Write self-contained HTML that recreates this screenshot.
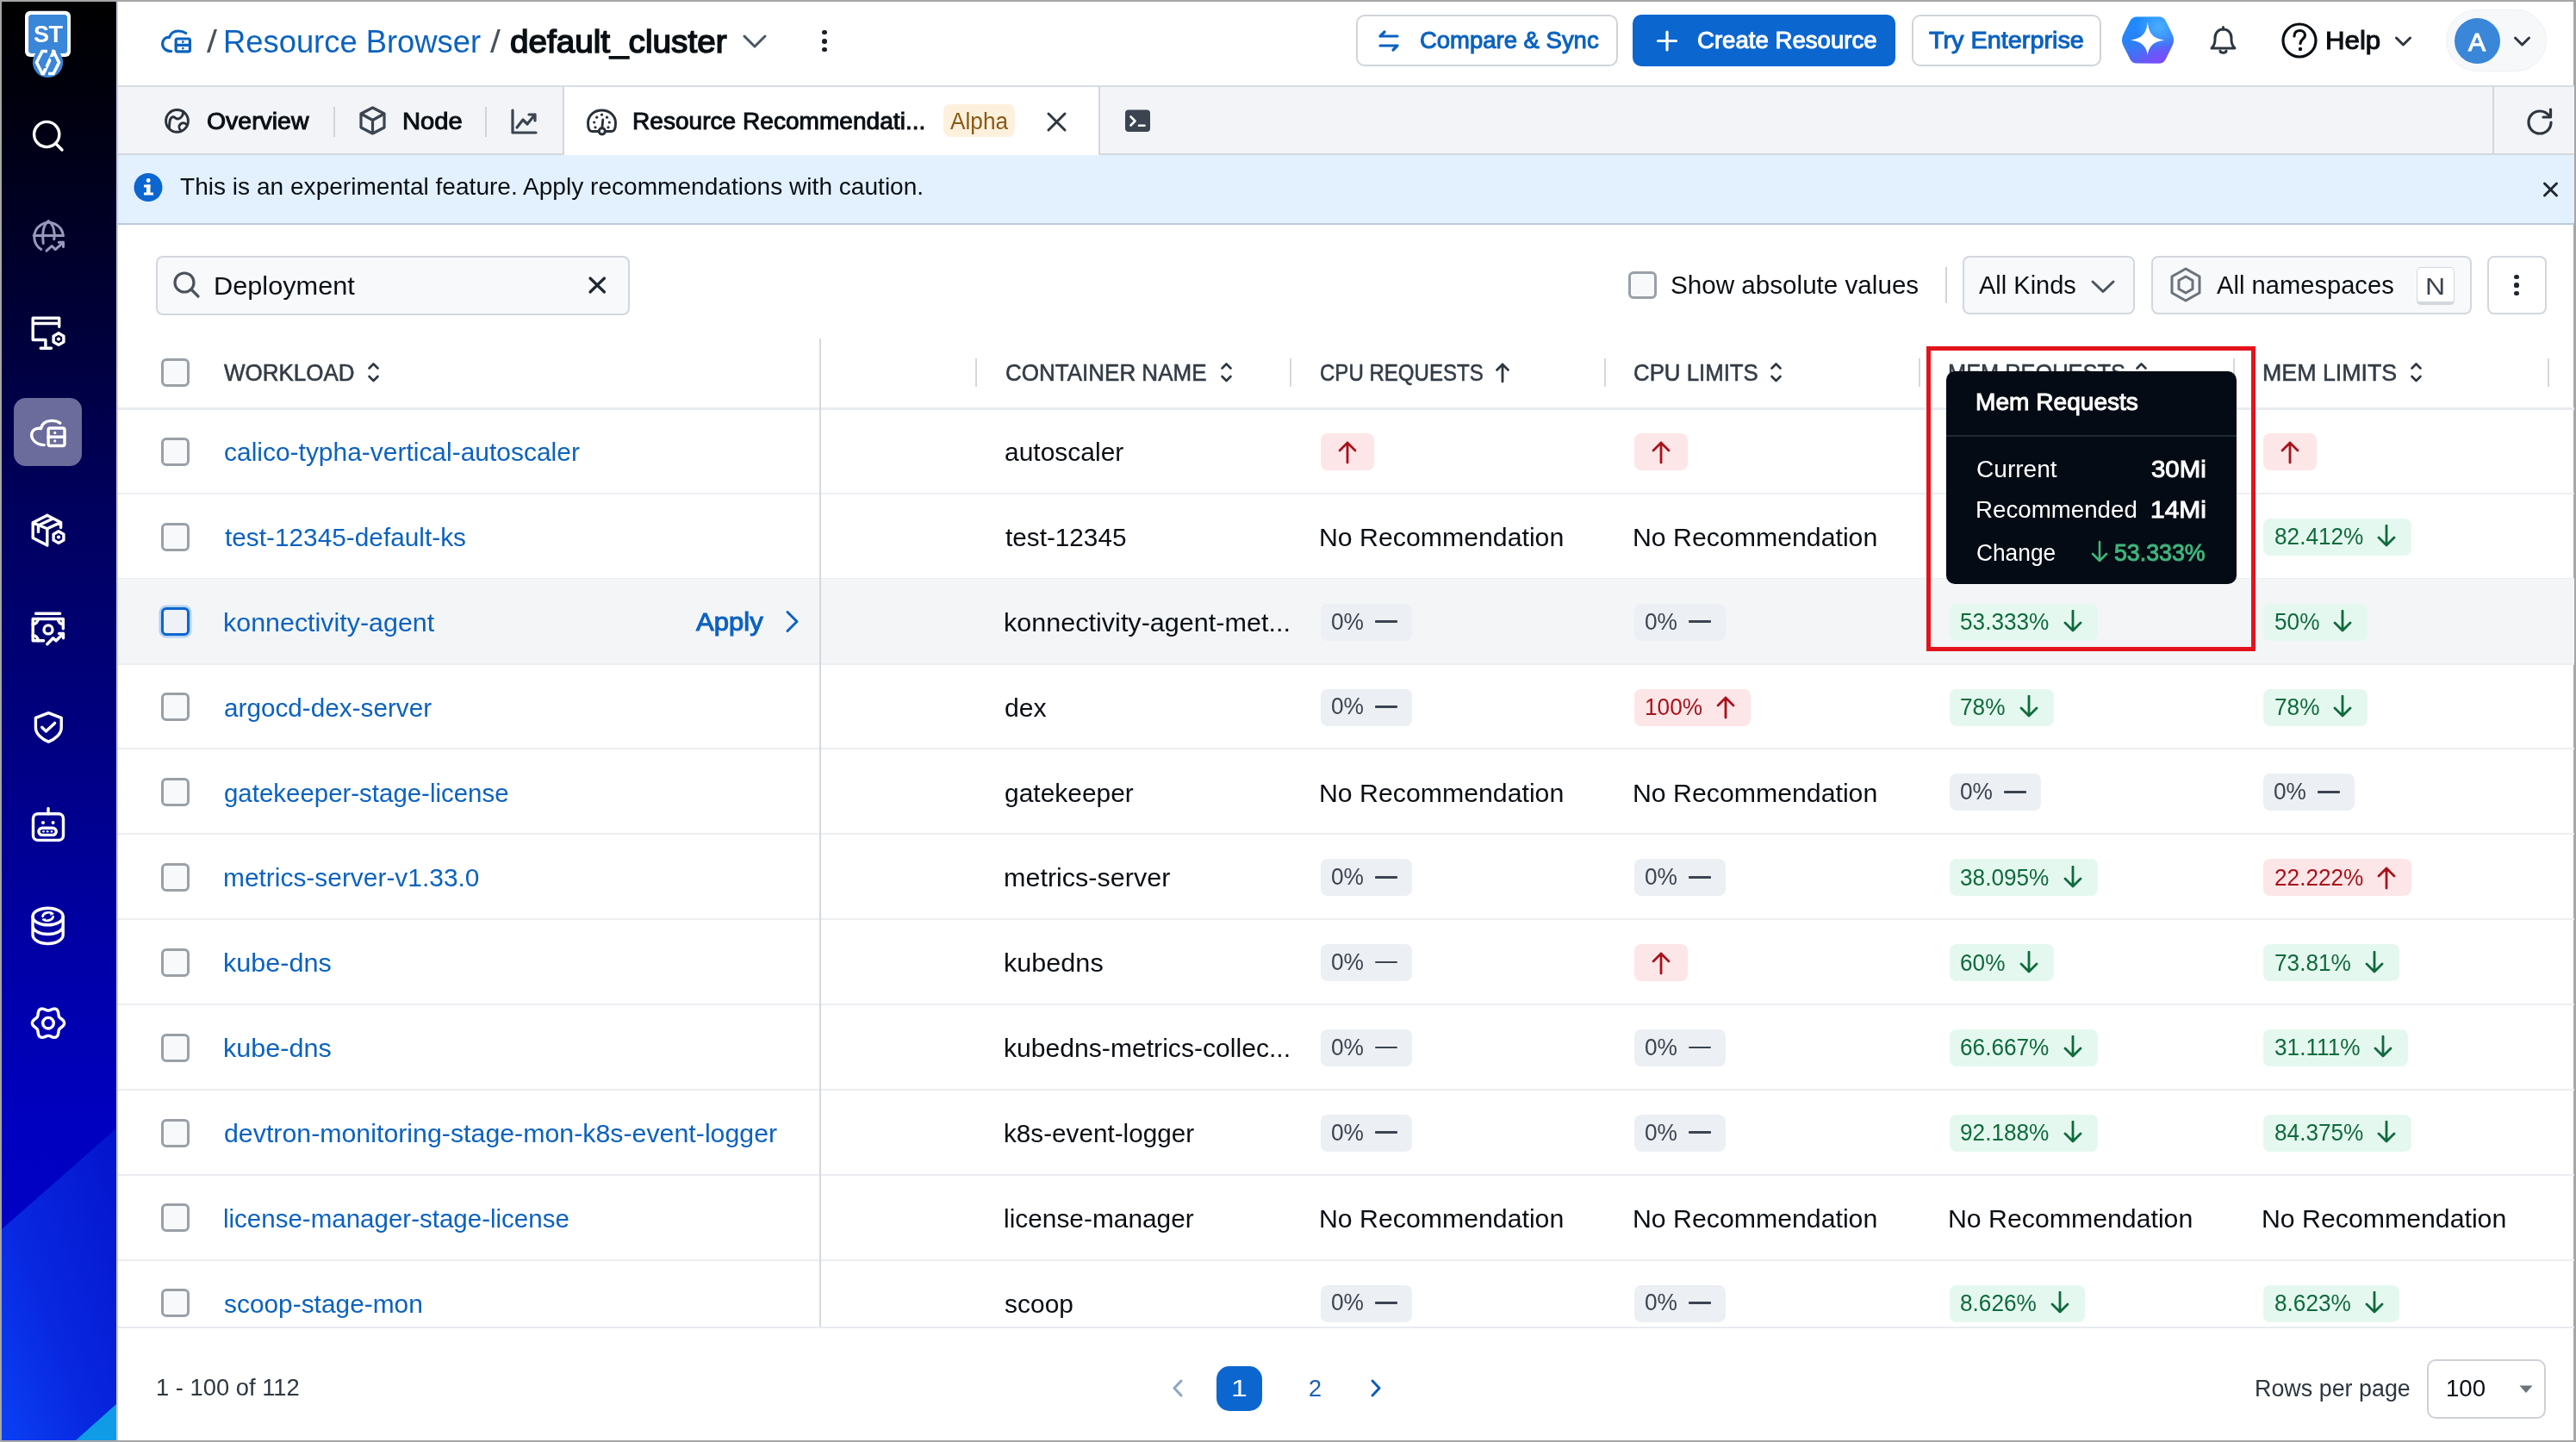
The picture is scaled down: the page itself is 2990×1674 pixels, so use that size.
<!DOCTYPE html>
<html><head><meta charset='utf-8'><style>
html,body{margin:0;padding:0;}
body{width:2990px;height:1674px;position:relative;overflow:hidden;background:#a6a6a6;font-family:"Liberation Sans", sans-serif;-webkit-font-smoothing:antialiased;}
#root{position:absolute;left:0;top:0;width:2990px;height:1674px;will-change:transform;}
</style></head><body>
<div id="root">
<div style='position:absolute;left:2px;top:2px;width:2985px;height:1670px;background:#ffffff'></div>
<div style='position:absolute;left:2px;top:2px;width:133px;height:1670px;overflow:hidden;background:linear-gradient(to bottom,#000000 0%,#00000c 6%,#000032 20%,#000060 36%,#00007e 50%,#0000a4 65%,#0000c0 78%,#0004cc 100%)'><svg width='133' height='1670' style='position:absolute;left:0;top:0'><defs><linearGradient id='sbband' x1='1' y1='0' x2='0' y2='1'><stop offset='0' stop-color='#0414cc'/><stop offset='0.6' stop-color='#0828e0'/><stop offset='1' stop-color='#0a40f4'/></linearGradient></defs><polygon points='133,1308 0,1425 0,1670 133,1670' fill='url(#sbband)'/><polygon points='133,1628 86,1670 133,1670' fill='#0f9be6'/></svg></div>
<div style='position:absolute;left:135px;top:2px;width:2px;height:1670px;background:#c9cbe8'></div>
<svg style='position:absolute;left:0;top:0' width='135' height='100' viewBox='0 0 135 100'><rect x='29' y='12.8' width='53' height='53.2' rx='6' fill='#ffffff'/><rect x='33.1' y='16.9' width='45' height='45' rx='3.5' fill='#3a86d8'/><text x='55.8' y='48.7' text-anchor='middle' font-family='Liberation Sans' font-weight='700' font-size='27' fill='#ffffff' letter-spacing='-0.5'>ST</text><circle cx='55.5' cy='72.5' r='17.6' fill='#3a86d8'/><g fill='none' stroke='#ffffff' stroke-width='3.6' stroke-linejoin='miter'><path d='M55 59.5 H49 L42.5 72.5 L49 85.5 H51'/><path d='M56 85.5 H62 L68.5 72.5 L62 59.5 H60'/></g><path d='M61.5 57.5 L65 59 L51.5 87.5 L48 86 Z' fill='#ffffff'/><path d='M48.5 66 L53.5 66 L50.5 72.5 L54 79 L49 79 L46 72.5 Z' fill='#3a86d8'/><path d='M62.5 66 L57.5 66 L60.5 72.5 L57 79 L62 79 L65 72.5 Z' fill='#3a86d8'/></svg>
<div style='position:absolute;left:16px;top:462px;width:79px;height:79px;background:#6b6b9c;border-radius:14px'></div>
<svg style='position:absolute;left:0;top:0' width='135' height='1674' viewBox='0 0 135 1674'><g stroke='#ffffff' stroke-width='3.4' fill='none' stroke-linecap='round' stroke-linejoin='round'><circle cx='54.2' cy='156' r='14.6'/><path d='M64.8 166.8 L72 174'/><path d='M68.7 379.3 V369.2 H38.2 V394.5 H52.9 V404.3 M38.2 375.5 H68.7 M47.2 404.3 H59.4'/><path d='M68.00 386.80 L73.89 390.20 L73.89 397.00 L68.00 400.40 L62.11 397.00 L62.11 390.20 Z'/><path d='M51.2 516.6 C43 516.6 36.7 511 36.7 505 C36.7 499 42 496.5 47.6 497.5 C49 491 54 488.4 60 488.4 C64 488.4 67.5 489.5 69.7 491.2'/><rect x='56.1' y='497' width='18.9' height='20.5' rx='2'/><path d='M56.1 507.2 H75'/><path d='M54.8 598.2 L70.6 606.4 V612.5 M54.8 598.2 L38.2 606.8 V624.4 L54.8 633.1 M38.2 606.8 L54.8 613.7 L70.6 606.4 M54.8 613.7 V633.1 M44.5 617.5 V610 L61 602.3'/><path d='M68.00 616.80 L73.89 620.20 L73.89 627.00 L68.00 630.40 L62.11 627.00 L62.11 620.20 Z'/><path d='M41.5 712.2 H69.7 M73.3 729.7 V718.5 H38.2 V743.8 H50.6'/><path d='M38.2 724.5 A6 6 0 0 0 44.2 718.5 M67.3 718.5 A6 6 0 0 0 73.3 724.5 M38.2 737.8 A6 6 0 0 1 44.2 743.8'/><circle cx='56' cy='730.9' r='5'/><path d='M54.8 747.7 L61.7 740.8 L65.1 743.8 L73.5 735.4 M68.5 735.4 H73.5 V740.8'/><path d='M56.3 827.7 L71.2 833.3 V844.7 C71.2 852 64 858 56.3 861.1 C48.6 858 41.4 852 41.4 844.7 V833.3 Z'/><path d='M48.7 844.3 L53.3 848.9 L63.6 839.4'/><path d='M56 938.5 V944.7'/><rect x='38.5' y='944.7' width='35' height='30.7' rx='5.5'/><rect x='44.9' y='961.2' width='20.4' height='8.2' rx='4.1'/><ellipse cx='55.6' cy='1064' rx='17.6' ry='9.8'/><path d='M38 1064 V1085 C38 1091 46 1095.5 55.6 1095.5 C65.2 1095.5 73.2 1091 73.2 1085 V1064 M38 1074.5 C38 1080.5 46 1084.5 55.6 1084.5 C65.2 1084.5 73.2 1080.5 73.2 1074.5'/><path d='M49.5 1064 C50 1059.5 57 1058 61 1060.5 M61.7 1064 C61 1068.5 54 1070 50.2 1067.5' stroke-width='2.6'/><path d='M74.60 1187.70 L74.38 1188.99 L73.76 1190.20 L72.84 1191.28 L71.76 1192.22 L70.66 1193.04 L69.69 1193.79 L68.93 1194.57 L68.42 1195.46 L68.12 1196.51 L67.95 1197.73 L67.79 1199.09 L67.52 1200.50 L67.04 1201.84 L66.30 1202.98 L65.30 1203.81 L64.08 1204.26 L62.72 1204.33 L61.32 1204.08 L59.97 1203.60 L58.71 1203.06 L57.57 1202.60 L56.51 1202.33 L55.49 1202.33 L54.43 1202.60 L53.29 1203.06 L52.03 1203.60 L50.68 1204.08 L49.28 1204.33 L47.92 1204.26 L46.70 1203.81 L45.70 1202.98 L44.96 1201.84 L44.48 1200.50 L44.21 1199.09 L44.05 1197.73 L43.88 1196.51 L43.58 1195.46 L43.07 1194.57 L42.31 1193.79 L41.34 1193.04 L40.24 1192.22 L39.16 1191.28 L38.24 1190.20 L37.62 1188.99 L37.40 1187.70 L37.62 1186.41 L38.24 1185.20 L39.16 1184.12 L40.24 1183.18 L41.34 1182.36 L42.31 1181.61 L43.07 1180.83 L43.58 1179.94 L43.88 1178.89 L44.05 1177.67 L44.21 1176.31 L44.48 1174.90 L44.96 1173.56 L45.70 1172.42 L46.70 1171.59 L47.92 1171.14 L49.28 1171.07 L50.68 1171.32 L52.03 1171.80 L53.29 1172.34 L54.43 1172.80 L55.49 1173.07 L56.51 1173.07 L57.57 1172.80 L58.71 1172.34 L59.97 1171.80 L61.32 1171.32 L62.72 1171.07 L64.08 1171.14 L65.30 1171.59 L66.30 1172.42 L67.04 1173.56 L67.52 1174.90 L67.79 1176.31 L67.95 1177.67 L68.12 1178.89 L68.42 1179.94 L68.93 1180.83 L69.69 1181.61 L70.66 1182.36 L71.76 1183.18 L72.84 1184.12 L73.76 1185.20 L74.38 1186.41 L74.60 1187.70 Z'/><circle cx='56' cy='1187.7' r='6.3'/></g><g fill='#ffffff'><circle cx='68' cy='393.6' r='2.1'/><circle cx='68' cy='623.6' r='2.1'/><circle cx='63.75' cy='502.4' r='1.6'/><circle cx='63.75' cy='511.9' r='1.6'/><circle cx='50' cy='955' r='2'/><circle cx='61.6' cy='955' r='2'/><circle cx='50.5' cy='965.3' r='1.3'/><circle cx='55.2' cy='965.3' r='1.3'/><circle cx='59.9' cy='965.3' r='1.3'/><path d='M58 1058.5 L62.5 1060.5 L58.5 1063 Z M53 1066 L49 1067.8 L53 1070 Z'/></g><g stroke='#9898bd' stroke-width='3' fill='none' stroke-linecap='round' stroke-linejoin='round'><path d='M73.3 273.4 A16.8 16.8 0 1 0 47.8 289.5'/><path d='M39.2 273.4 H73.3'/><path d='M50.2 282.4 C48.5 272 50 261 56.3 256.6 C62.5 261 64 270 62.8 277.8'/><path d='M54 291.2 L60.2 285.5 L64.3 289.7 L73.5 281.3 M68.2 281.3 H73.5 V286.6'/></g></svg>
<div style='position:absolute;left:137px;top:99px;width:2851px;height:2px;background:#d9dde2'></div>
<svg style='position:absolute;left:0;top:0' width='240' height='100' viewBox='0 0 240 100'><g stroke='#0b62c0' stroke-width='3.2' fill='none' stroke-linecap='round' stroke-linejoin='round'><path d='M198.7 59.5 C192.5 59.5 188.6 55.5 188.6 51 C188.6 46 192 43 196.5 43.5 C198 38.5 202 36 207 36 C210.5 36 213.5 37 215.7 38.5'/><rect x='204.2' y='45' width='16.2' height='14.8' rx='1.8'/><path d='M204.2 52.4 H220.4'/></g><g fill='#0b62c0'><circle cx='212.3' cy='48.7' r='1.4'/><circle cx='212.3' cy='56.1' r='1.4'/></g></svg>
<div style='position:absolute;left:240.00px;top:26.53px;font-size:36px;font-weight:400;line-height:43px;color:#4a525c;white-space:pre;transform:scaleX(1.2000);transform-origin:0 0;'>/</div>
<div style='position:absolute;left:258.97px;top:26.53px;font-size:36px;font-weight:400;line-height:43px;color:#0b62c0;white-space:pre;transform:scaleX(1.0102);transform-origin:0 0;'>Resource Browser</div>
<div style='position:absolute;left:568.50px;top:26.53px;font-size:36px;font-weight:400;line-height:43px;color:#4a525c;white-space:pre;transform:scaleX(1.1900);transform-origin:0 0;'>/</div>
<div style='position:absolute;left:592.33px;top:26.93px;font-size:36px;font-weight:400;line-height:43px;color:#0a0f14;white-space:pre;transform:scaleX(1.0742);transform-origin:0 0;-webkit-text-stroke:1.5px #0a0f14;'>default_cluster</div>
<svg style='position:absolute;left:862px;top:40px;' width='28' height='17' viewBox='0 0 28 17' fill='none'><path d='M2 2 L14 14 L26 2' stroke='#4b5563' stroke-width='3' fill='none' stroke-linecap='round' stroke-linejoin='round'/></svg>
<div style='position:absolute;left:954px;top:34.900000000000006px;width:5.600000000000023px;height:5.599999999999994px;background:#1a1f26;border-radius:50%'></div>
<div style='position:absolute;left:954px;top:45.0px;width:5.600000000000023px;height:5.599999999999994px;background:#1a1f26;border-radius:50%'></div>
<div style='position:absolute;left:954px;top:54.800000000000004px;width:5.600000000000023px;height:5.599999999999994px;background:#1a1f26;border-radius:50%'></div>
<div style='position:absolute;left:1574px;top:17px;width:304px;height:60px;box-sizing:border-box;border:2px solid #d0d4d9;border-radius:10px;background:#fff'></div>
<svg style='position:absolute;left:1598px;top:34px;' width='29' height='27' viewBox='0 0 29 27' fill='none'><g stroke='#0b62c0' stroke-width='3.2' fill='none' stroke-linecap='round' stroke-linejoin='round'><path d='M4 8 H24 M4 8 L9 3 M24 19 H4 M24 19 L19 24'/></g></svg>
<div style='position:absolute;left:1648.02px;top:30.00px;font-size:28px;font-weight:400;line-height:34px;color:#0b62c0;white-space:pre;transform:scaleX(0.9810);transform-origin:0 0;-webkit-text-stroke:1.00px #0b62c0;'>Compare &amp; Sync</div>
<div style='position:absolute;left:1895px;top:17px;width:305px;height:60px;background:#0b66d0;border-radius:10px'></div>
<svg style='position:absolute;left:1922px;top:35px;' width='26' height='25' viewBox='0 0 26 25' fill='none'><path d='M13 2 V23 M2.5 12.5 H23.5' stroke='#fff' stroke-width='3.2' stroke-linecap='round'/></svg>
<div style='position:absolute;left:1969.51px;top:30.00px;font-size:28px;font-weight:400;line-height:34px;color:#ffffff;white-space:pre;transform:scaleX(0.9857);transform-origin:0 0;-webkit-text-stroke:1.00px #ffffff;'>Create Resource</div>
<div style='position:absolute;left:2219px;top:17px;width:220px;height:60px;box-sizing:border-box;border:2px solid #d0d4d9;border-radius:10px;background:#fff'></div>
<div style='position:absolute;left:2238.97px;top:30.00px;font-size:28px;font-weight:400;line-height:34px;color:#0b62c0;white-space:pre;transform:scaleX(1.0289);transform-origin:0 0;-webkit-text-stroke:1.00px #0b62c0;'>Try Enterprise</div>
<svg style='position:absolute;left:0;top:0' width='2990' height='100' viewBox='0 0 2990 100'><defs><linearGradient id='aig' x1='0.35' y1='0' x2='0.65' y2='1'><stop offset='0' stop-color='#1a8cff'/><stop offset='0.5' stop-color='#2f7ff6'/><stop offset='1' stop-color='#6a55f6'/></linearGradient><radialGradient id='aih' cx='0.72' cy='0.22' r='0.45'><stop offset='0' stop-color='#4fb4ff' stop-opacity='0.9'/><stop offset='1' stop-color='#4fb4ff' stop-opacity='0'/></radialGradient><radialGradient id='aip' cx='0.72' cy='0.95' r='0.4'><stop offset='0' stop-color='#7d4cff' stop-opacity='0.9'/><stop offset='1' stop-color='#7d4cff' stop-opacity='0'/></radialGradient></defs><path id='aihex' d='M2480 19.5 H2506 Q2511 19.5 2513.5 24 L2521.5 40 Q2524.5 46.5 2521.5 53 L2513.5 69 Q2511 73.5 2506 73.5 H2480 Q2475 73.5 2472.5 69 L2464.5 53 Q2461.5 46.5 2464.5 40 L2472.5 24 Q2475 19.5 2480 19.5 Z' fill='url(#aig)'/><path d='M2480 19.5 H2506 Q2511 19.5 2513.5 24 L2521.5 40 Q2524.5 46.5 2521.5 53 L2513.5 69 Q2511 73.5 2506 73.5 H2480 Q2475 73.5 2472.5 69 L2464.5 53 Q2461.5 46.5 2464.5 40 L2472.5 24 Q2475 19.5 2480 19.5 Z' fill='url(#aih)'/><path d='M2480 19.5 H2506 Q2511 19.5 2513.5 24 L2521.5 40 Q2524.5 46.5 2521.5 53 L2513.5 69 Q2511 73.5 2506 73.5 H2480 Q2475 73.5 2472.5 69 L2464.5 53 Q2461.5 46.5 2464.5 40 L2472.5 24 Q2475 19.5 2480 19.5 Z' fill='url(#aip)'/><path d='M2492.8 25 C2494 38 2498 44.5 2512 46.4 C2498 48.5 2494 55 2492.8 64 C2491.5 55 2487.5 48.5 2473 46.4 C2487.5 44.5 2491.5 38 2492.8 25 Z' fill='#ffffff'/></svg>
<svg style='position:absolute;left:2563px;top:29px;' width='35' height='37' viewBox='0 0 35 37' fill='none'><g stroke='#2e3640' stroke-width='3' fill='none' stroke-linecap='round' stroke-linejoin='round'><path d='M4 27 C7 24 8 21 8 17 V15 C8 9 12 5 17.5 5 C23 5 27 9 27 15 V17 C27 21 28 24 31 27 Z'/><path d='M17.5 2.5 V5'/><path d='M14 30 C14 33 21 33 21 30'/></g></svg>
<svg style='position:absolute;left:2647px;top:25px;' width='44' height='44' viewBox='0 0 44 44' fill='none'><circle cx='22' cy='22' r='19' stroke='#0a0f14' stroke-width='3.2' fill='none'/><path d='M16 17 C16 12.5 19 10.5 22.5 10.5 C26 10.5 28.5 13 28.5 16 C28.5 20 23 20.5 23 25.5' stroke='#0a0f14' stroke-width='3.2' fill='none' stroke-linecap='round'/><circle cx='23' cy='32' r='2.2' fill='#0a0f14'/></svg>
<div style='position:absolute;left:2698.85px;top:30.45px;font-size:29px;font-weight:400;line-height:35px;color:#0a0f14;white-space:pre;transform:scaleX(1.0772);transform-origin:0 0;-webkit-text-stroke:1.04px #0a0f14;'>Help</div>
<svg style='position:absolute;left:2779px;top:41px;' width='21' height='14' viewBox='0 0 21 14' fill='none'><path d='M2.5 3 L10.5 11 L18.5 3' stroke='#2e3640' stroke-width='3' fill='none' stroke-linecap='round' stroke-linejoin='round'/></svg>
<div style='position:absolute;left:2839px;top:11px;width:117px;height:72px;box-sizing:border-box;background:#f6f8fa;border:1.5px solid #eef0f3;border-radius:36px'></div>
<div style='position:absolute;left:2849px;top:21px;width:53px;height:53px;background:#3a86d8;border-radius:50%'></div>
<div style='position:absolute;left:2865.00px;top:30.61px;font-size:30px;font-weight:400;line-height:36px;color:#ffffff;white-space:pre;-webkit-text-stroke:1.07px #ffffff;'>A</div>
<svg style='position:absolute;left:2917px;top:41px;' width='21' height='15' viewBox='0 0 21 15' fill='none'><path d='M2.5 3 L10.5 11 L18.5 3' stroke='#2e3640' stroke-width='3' fill='none' stroke-linecap='round' stroke-linejoin='round'/></svg>
<div style='position:absolute;left:137px;top:101px;width:2851px;height:77px;background:#f2f4f7'></div>
<div style='position:absolute;left:137px;top:178px;width:2851px;height:2px;background:#d3d7dc'></div>
<div style='position:absolute;left:653px;top:101px;width:624px;height:79px;background:#fff;box-sizing:border-box;border-left:2px solid #d3d7dc;border-right:2px solid #d3d7dc'></div>
<svg style='position:absolute;left:0;top:0' width='240' height='180' viewBox='0 0 240 180'><g stroke='#2a313a' stroke-width='2.9' fill='none' stroke-linecap='round' stroke-linejoin='round'><circle cx='205.5' cy='140.4' r='12.9'/><path d='M196.4 148.5 C196.8 144 196.5 140.5 198 137.8 C199.3 135.5 201.5 135 203.5 136.8 C205.5 138.5 207.8 138.2 209.8 136.5 C211.8 134.8 212.8 132 212.6 129.4'/><path d='M209.5 151 C207.8 149.5 207.3 146.5 209 144.5 C210.8 142.5 213.8 142.3 216.5 144.3'/></g></svg>
<div style='position:absolute;left:240.35px;top:125.44px;font-size:27px;font-weight:400;line-height:32px;color:#0a0f14;white-space:pre;transform:scaleX(1.0527);transform-origin:0 0;-webkit-text-stroke:0.96px #0a0f14;'>Overview</div>
<div style='position:absolute;left:386.5px;top:123.6px;width:2.0px;height:35.900000000000006px;background:#d0d4d9'></div>
<svg style='position:absolute;left:416px;top:122px;' width='33' height='36' viewBox='0 0 33 36' fill='none'><g stroke='#3b4450' stroke-width='3.2' fill='none' stroke-linejoin='round'><path d='M16.5 3 L30 10 V26 L16.5 33 L3 26 V10 Z'/><path d='M3 10 L16.5 17.5 L30 10 M16.5 17.5 V33'/></g></svg>
<div style='position:absolute;left:466.84px;top:125.34px;font-size:27px;font-weight:400;line-height:32px;color:#0a0f14;white-space:pre;transform:scaleX(1.0806);transform-origin:0 0;-webkit-text-stroke:0.96px #0a0f14;'>Node</div>
<div style='position:absolute;left:563px;top:123.6px;width:2px;height:35.900000000000006px;background:#d0d4d9'></div>
<svg style='position:absolute;left:592px;top:125px;' width='33' height='32' viewBox='0 0 33 32' fill='none'><g stroke='#3b4450' stroke-width='3.2' fill='none' stroke-linecap='round' stroke-linejoin='round'><path d='M3 3 V29 H30'/><path d='M8 23 L15 14 L20 19 L29 8 M22 8 H29 V15'/></g></svg>
<svg style='position:absolute;left:0;top:0' width='740' height='180' viewBox='0 0 740 180'><g stroke='#2a313a' stroke-width='3' fill='none' stroke-linecap='round' stroke-linejoin='round'><path d='M695 152.5 H687 C684 152.5 682.5 148 682.5 142.5 C682.5 134 689.8 128 698.5 128 C707.2 128 714.5 134 714.5 142.5 C714.5 148 713 152.5 710 152.5 H702'/><path d='M698.8 148.5 L699.8 138.8' stroke-width='2.8'/><circle cx='698.8' cy='152.3' r='3.6' fill='#ffffff'/></g><g fill='#2a313a'><circle cx='698.5' cy='133.2' r='1.6'/><circle cx='692.7' cy='136.2' r='1.6'/><circle cx='704.5' cy='136.2' r='1.6'/><circle cx='689.7' cy='142' r='1.6'/><circle cx='707.3' cy='142' r='1.6'/><circle cx='691' cy='147.8' r='1.6'/><circle cx='706' cy='147.8' r='1.6'/></g></svg>
<div style='position:absolute;left:733.92px;top:125.44px;font-size:27px;font-weight:400;line-height:32px;color:#0a0f14;white-space:pre;transform:scaleX(1.0402);transform-origin:0 0;-webkit-text-stroke:0.96px #0a0f14;'>Resource Recommendati...</div>
<div style='position:absolute;left:1095px;top:121px;width:83px;height:38px;background:#fdf1de;border-radius:8px'></div>
<div style='position:absolute;left:1103.00px;top:125.14px;font-size:27px;font-weight:400;line-height:32px;color:#8a5a14;white-space:pre;transform:scaleX(0.9710);transform-origin:0 0;'>Alpha</div>
<svg style='position:absolute;left:1214px;top:129px;' width='26' height='25' viewBox='0 0 26 25' fill='none'><path d='M3 3 L22 22 M22 3 L3 22' stroke='#2e3640' stroke-width='3' stroke-linecap='round'/></svg>
<svg style='position:absolute;left:1305px;top:126px;' width='32' height='30' viewBox='0 0 32 30' fill='none'><rect x='1' y='1.5' width='29' height='25.6' rx='4' fill='#3b4450'/><path d='M7.5 9.5 L12.5 14.5 L7.5 19.5' stroke='#fff' stroke-width='2.6' fill='none' stroke-linecap='round' stroke-linejoin='round'/><path d='M17 19.8 H23.5' stroke='#fff' stroke-width='2.6' stroke-linecap='round'/></svg>
<div style='position:absolute;left:2893px;top:101px;width:2px;height:77px;background:#d3d7dc'></div>
<svg style='position:absolute;left:2931px;top:124px;' width='35' height='34' viewBox='0 0 35 34' fill='none'><g stroke='#2e3640' stroke-width='3.2' fill='none' stroke-linecap='round' stroke-linejoin='round'><path d='M30 18 C30 25.5 24 31 17 31 C10 31 4 25.5 4 18 C4 10.5 10 5 17 5 C22 5 26 7.5 28.5 11.5'/><path d='M29.5 3 V12 H21'/></g></svg>
<div style='position:absolute;left:137px;top:180px;width:2851px;height:79px;background:#e2f1fd'></div>
<div style='position:absolute;left:137px;top:259px;width:2851px;height:2px;background:#b9cadb'></div>
<svg style='position:absolute;left:155px;top:200px;' width='34' height='35' viewBox='0 0 34 35' fill='none'><circle cx='17' cy='17.5' r='16.5' fill='#0b66d0'/><rect x='15' y='14.5' width='4.5' height='11' fill='#fff'/><rect x='12' y='14.5' width='7.5' height='3' fill='#fff'/><rect x='12' y='23.5' width='11' height='3' fill='#fff'/><circle cx='17.2' cy='9.5' r='2.4' fill='#fff'/></svg>
<div style='position:absolute;left:208.50px;top:200.30px;font-size:28px;font-weight:400;line-height:34px;color:#0a0f14;white-space:pre;transform:scaleX(1.0029);transform-origin:0 0;'>This is an experimental feature. Apply recommendations with caution.</div>
<svg style='position:absolute;left:2949px;top:209px;' width='23' height='22' viewBox='0 0 23 22' fill='none'><path d='M4.5 4 L18.5 18 M18.5 4 L4.5 18' stroke='#1f2730' stroke-width='3' stroke-linecap='round'/></svg>
<div style='position:absolute;left:181px;top:297px;width:550px;height:69px;box-sizing:border-box;background:#f7f9fb;border:2px solid #d3d8de;border-radius:8px'></div>
<svg style='position:absolute;left:200px;top:314px;' width='34' height='33' viewBox='0 0 34 33' fill='none'><g stroke='#4a525c' stroke-width='3.2' fill='none' stroke-linecap='round'><circle cx='14' cy='14' r='11'/><path d='M22 22 L30 30'/></g></svg>
<div style='position:absolute;left:247.88px;top:315.25px;font-size:29px;font-weight:400;line-height:35px;color:#0a0f14;white-space:pre;transform:scaleX(1.0588);transform-origin:0 0;'>Deployment</div>
<svg style='position:absolute;left:682px;top:320px;' width='23' height='22' viewBox='0 0 23 22' fill='none'><path d='M3 3 L19.5 19 M19.5 3 L3 19' stroke='#1f2730' stroke-width='3.2' stroke-linecap='round'/></svg>
<div style='position:absolute;left:1890px;top:314.5px;width:32.5px;height:32.0px;box-sizing:border-box;background:#f7f9fb;border:3px solid #9aa0a7;border-radius:6px'></div>
<div style='position:absolute;left:1938.98px;top:314.15px;font-size:29px;font-weight:400;line-height:35px;color:#0a0f14;white-space:pre;transform:scaleX(1.0214);transform-origin:0 0;'>Show absolute values</div>
<div style='position:absolute;left:2257.5px;top:310px;width:2.0px;height:42px;background:#d0d4d9'></div>
<div style='position:absolute;left:2278px;top:296.5px;width:200px;height:68.5px;box-sizing:border-box;background:#f7f9fb;border:2px solid #d3d8de;border-radius:8px'></div>
<div style='position:absolute;left:2297.00px;top:314.15px;font-size:29px;font-weight:400;line-height:35px;color:#0a0f14;white-space:pre;'>All Kinds</div>
<svg style='position:absolute;left:2426px;top:324px;' width='30' height='18' viewBox='0 0 30 18' fill='none'><path d='M3 3 L15 14.5 L27 3' stroke='#4a525c' stroke-width='3' fill='none' stroke-linecap='round' stroke-linejoin='round'/></svg>
<div style='position:absolute;left:2497px;top:296.5px;width:372px;height:68.5px;box-sizing:border-box;background:#f7f9fb;border:2px solid #d3d8de;border-radius:8px'></div>
<svg style='position:absolute;left:2517px;top:309px;' width='40' height='43' viewBox='0 0 40 43' fill='none'><g stroke='#6b737c' stroke-width='3' fill='none' stroke-linejoin='round'><path d='M20 3 L36 12 V31 L20 40 L4 31 V12 Z'/><path d='M20 12 L28 16.5 V26.5 L20 31 L12 26.5 V16.5 Z'/></g></svg>
<div style='position:absolute;left:2573.00px;top:314.15px;font-size:29px;font-weight:400;line-height:35px;color:#0a0f14;white-space:pre;transform:scaleX(1.0049);transform-origin:0 0;'>All namespaces</div>
<div style='position:absolute;left:2805px;top:309.5px;width:44px;height:44.5px;box-sizing:border-box;background:#fff;border:1.5px solid #d3d8de;border-bottom:4px solid #d3d8de;border-radius:5px'></div>
<div style='position:absolute;left:2814.62px;top:316.64px;font-size:27px;font-weight:400;line-height:32px;color:#3b4450;white-space:pre;transform:scaleX(1.1875);transform-origin:0 0;'>N</div>
<div style='position:absolute;left:2887px;top:296.5px;width:69px;height:68.5px;box-sizing:border-box;background:#fff;border:2px solid #d3d8de;border-radius:8px'></div>
<div style='position:absolute;left:2918.4px;top:318.9px;width:5.199999999999818px;height:5.2000000000000455px;background:#1f2730;border-radius:50%'></div>
<div style='position:absolute;left:2918.4px;top:328.4px;width:5.199999999999818px;height:5.2000000000000455px;background:#1f2730;border-radius:50%'></div>
<div style='position:absolute;left:2918.4px;top:337.9px;width:5.199999999999818px;height:5.2000000000000455px;background:#1f2730;border-radius:50%'></div>
<div style='position:absolute;left:186.5px;top:415.5px;width:33.0px;height:33.0px;box-sizing:border-box;border-radius:6px;background:#f7f9fb;border:3px solid #9aa0a7'></div>
<div style='position:absolute;left:260.00px;top:417.14px;font-size:27px;font-weight:400;line-height:32px;color:#333c46;white-space:pre;transform:scaleX(0.9615);transform-origin:0 0;-webkit-text-stroke:0.58px #333c46;'>WORKLOAD</div>
<svg style='position:absolute;left:426px;top:420px;' width='15' height='25' viewBox='0 0 15 25' fill='none'><g stroke='#2e3640' stroke-width='2.6' fill='none' stroke-linecap='round' stroke-linejoin='round'><path d='M2.5 7.5 L7.5 2.5 L12.5 7.5 M2.5 17 L7.5 22 L12.5 17'/></g></svg>
<div style='position:absolute;left:1131.5px;top:416px;width:2.0px;height:33px;background:#d5d9de'></div>
<div style='position:absolute;left:1166.74px;top:417.14px;font-size:27px;font-weight:400;line-height:32px;color:#333c46;white-space:pre;transform:scaleX(0.9627);transform-origin:0 0;-webkit-text-stroke:0.58px #333c46;'>CONTAINER NAME</div>
<svg style='position:absolute;left:1416px;top:420px;' width='15' height='25' viewBox='0 0 15 25' fill='none'><g stroke='#2e3640' stroke-width='2.6' fill='none' stroke-linecap='round' stroke-linejoin='round'><path d='M2.5 7.5 L7.5 2.5 L12.5 7.5 M2.5 17 L7.5 22 L12.5 17'/></g></svg>
<div style='position:absolute;left:1497px;top:416px;width:2px;height:33px;background:#d5d9de'></div>
<div style='position:absolute;left:1531.71px;top:417.14px;font-size:27px;font-weight:400;line-height:32px;color:#333c46;white-space:pre;transform:scaleX(0.8905);transform-origin:0 0;-webkit-text-stroke:0.58px #333c46;'>CPU REQUESTS</div>
<svg style='position:absolute;left:1735px;top:420px;' width='18' height='26' viewBox='0 0 18 26' fill='none'><g stroke='#2e3640' stroke-width='2.8' fill='none' stroke-linecap='round' stroke-linejoin='round'><path d='M9 23 V3 M2.5 9.5 L9 3 L15.5 9.5'/></g></svg>
<div style='position:absolute;left:1862px;top:416px;width:2px;height:33px;background:#d5d9de'></div>
<div style='position:absolute;left:1896.04px;top:417.14px;font-size:27px;font-weight:400;line-height:32px;color:#333c46;white-space:pre;transform:scaleX(0.9557);transform-origin:0 0;-webkit-text-stroke:0.58px #333c46;'>CPU LIMITS</div>
<svg style='position:absolute;left:2054px;top:420px;' width='15' height='25' viewBox='0 0 15 25' fill='none'><g stroke='#2e3640' stroke-width='2.6' fill='none' stroke-linecap='round' stroke-linejoin='round'><path d='M2.5 7.5 L7.5 2.5 L12.5 7.5 M2.5 17 L7.5 22 L12.5 17'/></g></svg>
<div style='position:absolute;left:2227px;top:416px;width:2px;height:33px;background:#d5d9de'></div>
<div style='position:absolute;left:2261.12px;top:417.14px;font-size:27px;font-weight:400;line-height:32px;color:#333c46;white-space:pre;transform:scaleX(0.9398);transform-origin:0 0;-webkit-text-stroke:0.58px #333c46;'>MEM REQUESTS</div>
<svg style='position:absolute;left:2478px;top:420px;' width='15' height='25' viewBox='0 0 15 25' fill='none'><g stroke='#2e3640' stroke-width='2.6' fill='none' stroke-linecap='round' stroke-linejoin='round'><path d='M2.5 7.5 L7.5 2.5 L12.5 7.5 M2.5 17 L7.5 22 L12.5 17'/></g></svg>
<div style='position:absolute;left:2592px;top:416px;width:2px;height:33px;background:#d5d9de'></div>
<div style='position:absolute;left:2626.02px;top:417.14px;font-size:27px;font-weight:400;line-height:32px;color:#333c46;white-space:pre;transform:scaleX(0.9916);transform-origin:0 0;-webkit-text-stroke:0.58px #333c46;'>MEM LIMITS</div>
<svg style='position:absolute;left:2797px;top:420px;' width='15' height='25' viewBox='0 0 15 25' fill='none'><g stroke='#2e3640' stroke-width='2.6' fill='none' stroke-linecap='round' stroke-linejoin='round'><path d='M2.5 7.5 L7.5 2.5 L12.5 7.5 M2.5 17 L7.5 22 L12.5 17'/></g></svg>
<div style='position:absolute;left:2957px;top:416px;width:2px;height:33px;background:#d5d9de'></div>
<div style='position:absolute;left:137px;top:472.5px;width:2851px;height:3.0px;background:#e8ebef'></div>
<div style='position:absolute;left:0;top:0;width:2990px;height:1541px;overflow:hidden'>
<div style='position:absolute;left:137px;top:571.8499999999999px;width:2851px;height:2.0px;background:#eceef1'></div>
<div style='position:absolute;left:186.5px;top:507.70000000000005px;width:33.0px;height:33.0px;box-sizing:border-box;border-radius:6px;background:#f7f9fb;border:3px solid #9aa0a7'></div>
<div style='position:absolute;left:259.77px;top:508.15px;font-size:29px;font-weight:400;line-height:35px;color:#0b62c0;white-space:pre;transform:scaleX(1.0329);transform-origin:0 0;'>calico-typha-vertical-autoscaler</div>
<div style='position:absolute;left:1166.27px;top:508.15px;font-size:29px;font-weight:400;line-height:35px;color:#0a0f14;white-space:pre;transform:scaleX(1.0338);transform-origin:0 0;'>autoscaler</div>
<div style='position:absolute;left:1532.6px;top:503.0px;width:62.0px;height:43.0px;background:#fde6e7;border-radius:8px'></div>
<svg style='position:absolute;left:1551.6px;top:510.5px;' width='24.0' height='28.0' viewBox='0 0 24.0 28.0' fill='none'><g stroke='#a8121b' stroke-width='2.8' fill='none' stroke-linecap='round' stroke-linejoin='round'><path d='M12 26 V3 M3 12 L12 3 L21 12'/></g></svg>
<div style='position:absolute;left:1897px;top:503.0px;width:62px;height:43.0px;background:#fde6e7;border-radius:8px'></div>
<svg style='position:absolute;left:1916px;top:510.5px;' width='24' height='28.0' viewBox='0 0 24 28.0' fill='none'><g stroke='#a8121b' stroke-width='2.8' fill='none' stroke-linecap='round' stroke-linejoin='round'><path d='M12 26 V3 M3 12 L12 3 L21 12'/></g></svg>
<div style='position:absolute;left:2262.6px;top:503.0px;width:172.3499999999999px;height:43.0px;background:#e5f8ef;border-radius:8px'></div>
<div style='position:absolute;left:2275.13px;top:508.44px;font-size:27px;font-weight:400;line-height:32px;color:#0f6a3d;white-space:pre;transform:scaleX(0.9700);transform-origin:0 0;'>53.333%</div>
<svg style='position:absolute;left:2393.95px;top:510.5px;' width='24.0' height='28.0' viewBox='0 0 24.0 28.0' fill='none'><g stroke='#0f6a3d' stroke-width='2.8' fill='none' stroke-linecap='round' stroke-linejoin='round'><path d='M12 1 V24 M3 15 L12 24 L21 15'/></g></svg>
<div style='position:absolute;left:2627px;top:503.0px;width:62px;height:43.0px;background:#fde6e7;border-radius:8px'></div>
<svg style='position:absolute;left:2646px;top:510.5px;' width='24' height='28.0' viewBox='0 0 24 28.0' fill='none'><g stroke='#a8121b' stroke-width='2.8' fill='none' stroke-linecap='round' stroke-linejoin='round'><path d='M12 26 V3 M3 12 L12 3 L21 12'/></g></svg>
<div style='position:absolute;left:137px;top:670.6999999999999px;width:2851px;height:2.0px;background:#eceef1'></div>
<div style='position:absolute;left:186.5px;top:606.55px;width:33.0px;height:33.0px;box-sizing:border-box;border-radius:6px;background:#f7f9fb;border:3px solid #9aa0a7'></div>
<div style='position:absolute;left:260.80px;top:607.00px;font-size:29px;font-weight:400;line-height:35px;color:#0b62c0;white-space:pre;transform:scaleX(1.0276);transform-origin:0 0;'>test-12345-default-ks</div>
<div style='position:absolute;left:1167.30px;top:607.00px;font-size:29px;font-weight:400;line-height:35px;color:#0a0f14;white-space:pre;transform:scaleX(1.0250);transform-origin:0 0;'>test-12345</div>
<div style='position:absolute;left:1530.51px;top:607.00px;font-size:29px;font-weight:400;line-height:35px;color:#0a0f14;white-space:pre;transform:scaleX(1.0435);transform-origin:0 0;'>No Recommendation</div>
<div style='position:absolute;left:1894.91px;top:607.00px;font-size:29px;font-weight:400;line-height:35px;color:#0a0f14;white-space:pre;transform:scaleX(1.0435);transform-origin:0 0;'>No Recommendation</div>
<div style='position:absolute;left:2262.6px;top:601.8499999999999px;width:172.3499999999999px;height:43.0px;background:#e5f8ef;border-radius:8px'></div>
<div style='position:absolute;left:2275.13px;top:607.29px;font-size:27px;font-weight:400;line-height:32px;color:#0f6a3d;white-space:pre;transform:scaleX(0.9700);transform-origin:0 0;'>82.412%</div>
<svg style='position:absolute;left:2393.95px;top:609.3499999999999px;' width='24.0' height='28.0' viewBox='0 0 24.0 28.0' fill='none'><g stroke='#0f6a3d' stroke-width='2.8' fill='none' stroke-linecap='round' stroke-linejoin='round'><path d='M12 1 V24 M3 15 L12 24 L21 15'/></g></svg>
<div style='position:absolute;left:2627px;top:601.8499999999999px;width:172.3499999999999px;height:43.0px;background:#e5f8ef;border-radius:8px'></div>
<div style='position:absolute;left:2639.53px;top:607.29px;font-size:27px;font-weight:400;line-height:32px;color:#0f6a3d;white-space:pre;transform:scaleX(0.9700);transform-origin:0 0;'>82.412%</div>
<svg style='position:absolute;left:2758.35px;top:609.3499999999999px;' width='24.0' height='28.0' viewBox='0 0 24.0 28.0' fill='none'><g stroke='#0f6a3d' stroke-width='2.8' fill='none' stroke-linecap='round' stroke-linejoin='round'><path d='M12 1 V24 M3 15 L12 24 L21 15'/></g></svg>
<div style='position:absolute;left:137px;top:671.9px;width:2851px;height:98.85000000000002px;background:#f3f5f7'></div>
<div style='position:absolute;left:137px;top:769.55px;width:2851px;height:2.0px;background:#eceef1'></div>
<div style='position:absolute;left:186.5px;top:705.4px;width:33.0px;height:33.0px;box-sizing:border-box;border-radius:6px;background:#eef1f5;border:3.5px solid #0b66d0;box-shadow:0 0 0 2.5px #b5d3f5'></div>
<div style='position:absolute;left:258.70px;top:705.85px;font-size:29px;font-weight:400;line-height:35px;color:#0b62c0;white-space:pre;transform:scaleX(1.0491);transform-origin:0 0;'>konnectivity-agent</div>
<div style='position:absolute;left:807.60px;top:704.85px;font-size:29px;font-weight:400;line-height:35px;color:#0b62c0;white-space:pre;transform:scaleX(1.0708);transform-origin:0 0;-webkit-text-stroke:1.04px #0b62c0;'>Apply</div>
<svg style='position:absolute;left:910px;top:707.9px;' width='21' height='27.0' viewBox='0 0 21 27.0' fill='none'><path d='M4 2.5 L15 13.5 L4 24.5' stroke='#0b62c0' stroke-width='3' fill='none' stroke-linecap='round' stroke-linejoin='round'/></svg>
<div style='position:absolute;left:1165.19px;top:705.85px;font-size:29px;font-weight:400;line-height:35px;color:#0a0f14;white-space:pre;transform:scaleX(1.0537);transform-origin:0 0;'>konnectivity-agent-met...</div>
<div style='position:absolute;left:1532.6px;top:700.6999999999999px;width:106.0px;height:43.0px;background:#eceff3;border-radius:8px'></div>
<div style='position:absolute;left:1544.63px;top:705.54px;font-size:27px;font-weight:400;line-height:32px;color:#3b4450;white-space:pre;transform:scaleX(0.9730);transform-origin:0 0;'>0%</div>
<div style='position:absolute;left:1595.6px;top:720.3px;width:26.0px;height:2.800000000000068px;background:#3b4450;border-radius:1px'></div>
<div style='position:absolute;left:1897px;top:700.6999999999999px;width:106px;height:43.0px;background:#eceff3;border-radius:8px'></div>
<div style='position:absolute;left:1909.03px;top:705.54px;font-size:27px;font-weight:400;line-height:32px;color:#3b4450;white-space:pre;transform:scaleX(0.9730);transform-origin:0 0;'>0%</div>
<div style='position:absolute;left:1960px;top:720.3px;width:26px;height:2.800000000000068px;background:#3b4450;border-radius:1px'></div>
<div style='position:absolute;left:2262.6px;top:700.6999999999999px;width:172.3499999999999px;height:43.0px;background:#e5f8ef;border-radius:8px'></div>
<div style='position:absolute;left:2275.13px;top:706.14px;font-size:27px;font-weight:400;line-height:32px;color:#0f6a3d;white-space:pre;transform:scaleX(0.9700);transform-origin:0 0;'>53.333%</div>
<svg style='position:absolute;left:2393.95px;top:708.1999999999999px;' width='24.0' height='28.0' viewBox='0 0 24.0 28.0' fill='none'><g stroke='#0f6a3d' stroke-width='2.8' fill='none' stroke-linecap='round' stroke-linejoin='round'><path d='M12 1 V24 M3 15 L12 24 L21 15'/></g></svg>
<div style='position:absolute;left:2627px;top:700.6999999999999px;width:120.94000000000005px;height:43.0px;background:#e5f8ef;border-radius:8px'></div>
<div style='position:absolute;left:2639.53px;top:706.14px;font-size:27px;font-weight:400;line-height:32px;color:#0f6a3d;white-space:pre;transform:scaleX(0.9700);transform-origin:0 0;'>50%</div>
<svg style='position:absolute;left:2706.94px;top:708.1999999999999px;' width='24.0' height='28.0' viewBox='0 0 24.0 28.0' fill='none'><g stroke='#0f6a3d' stroke-width='2.8' fill='none' stroke-linecap='round' stroke-linejoin='round'><path d='M12 1 V24 M3 15 L12 24 L21 15'/></g></svg>
<div style='position:absolute;left:137px;top:868.4px;width:2851px;height:2.0px;background:#eceef1'></div>
<div style='position:absolute;left:186.5px;top:804.25px;width:33.0px;height:33.0px;box-sizing:border-box;border-radius:6px;background:#f7f9fb;border:3px solid #9aa0a7'></div>
<div style='position:absolute;left:259.78px;top:804.70px;font-size:29px;font-weight:400;line-height:35px;color:#0b62c0;white-space:pre;transform:scaleX(1.0248);transform-origin:0 0;'>argocd-dex-server</div>
<div style='position:absolute;left:1166.26px;top:804.70px;font-size:29px;font-weight:400;line-height:35px;color:#0a0f14;white-space:pre;transform:scaleX(1.0422);transform-origin:0 0;'>dex</div>
<div style='position:absolute;left:1532.6px;top:799.55px;width:106.0px;height:43.0px;background:#eceff3;border-radius:8px'></div>
<div style='position:absolute;left:1544.63px;top:804.39px;font-size:27px;font-weight:400;line-height:32px;color:#3b4450;white-space:pre;transform:scaleX(0.9730);transform-origin:0 0;'>0%</div>
<div style='position:absolute;left:1595.6px;top:819.15px;width:26.0px;height:2.800000000000068px;background:#3b4450;border-radius:1px'></div>
<div style='position:absolute;left:1897px;top:799.55px;width:134.51999999999998px;height:43.0px;background:#fde6e7;border-radius:8px'></div>
<div style='position:absolute;left:1908.56px;top:804.99px;font-size:27px;font-weight:400;line-height:32px;color:#a8121b;white-space:pre;transform:scaleX(0.9700);transform-origin:0 0;'>100%</div>
<svg style='position:absolute;left:1990.52px;top:807.05px;' width='24.0' height='28.0' viewBox='0 0 24.0 28.0' fill='none'><g stroke='#a8121b' stroke-width='2.8' fill='none' stroke-linecap='round' stroke-linejoin='round'><path d='M12 26 V3 M3 12 L12 3 L21 12'/></g></svg>
<div style='position:absolute;left:2262.6px;top:799.55px;width:120.94000000000005px;height:43.0px;background:#e5f8ef;border-radius:8px'></div>
<div style='position:absolute;left:2275.13px;top:804.99px;font-size:27px;font-weight:400;line-height:32px;color:#0f6a3d;white-space:pre;transform:scaleX(0.9700);transform-origin:0 0;'>78%</div>
<svg style='position:absolute;left:2342.54px;top:807.05px;' width='24.0' height='28.0' viewBox='0 0 24.0 28.0' fill='none'><g stroke='#0f6a3d' stroke-width='2.8' fill='none' stroke-linecap='round' stroke-linejoin='round'><path d='M12 1 V24 M3 15 L12 24 L21 15'/></g></svg>
<div style='position:absolute;left:2627px;top:799.55px;width:120.94000000000005px;height:43.0px;background:#e5f8ef;border-radius:8px'></div>
<div style='position:absolute;left:2639.53px;top:804.99px;font-size:27px;font-weight:400;line-height:32px;color:#0f6a3d;white-space:pre;transform:scaleX(0.9700);transform-origin:0 0;'>78%</div>
<svg style='position:absolute;left:2706.94px;top:807.05px;' width='24.0' height='28.0' viewBox='0 0 24.0 28.0' fill='none'><g stroke='#0f6a3d' stroke-width='2.8' fill='none' stroke-linecap='round' stroke-linejoin='round'><path d='M12 1 V24 M3 15 L12 24 L21 15'/></g></svg>
<div style='position:absolute;left:137px;top:967.2499999999999px;width:2851px;height:2.0px;background:#eceef1'></div>
<div style='position:absolute;left:186.5px;top:903.0999999999999px;width:33.0px;height:33.0px;box-sizing:border-box;border-radius:6px;background:#f7f9fb;border:3px solid #9aa0a7'></div>
<div style='position:absolute;left:259.78px;top:903.55px;font-size:29px;font-weight:400;line-height:35px;color:#0b62c0;white-space:pre;transform:scaleX(1.0151);transform-origin:0 0;'>gatekeeper-stage-license</div>
<div style='position:absolute;left:1166.27px;top:903.55px;font-size:29px;font-weight:400;line-height:35px;color:#0a0f14;white-space:pre;transform:scaleX(1.0326);transform-origin:0 0;'>gatekeeper</div>
<div style='position:absolute;left:1530.51px;top:903.55px;font-size:29px;font-weight:400;line-height:35px;color:#0a0f14;white-space:pre;transform:scaleX(1.0435);transform-origin:0 0;'>No Recommendation</div>
<div style='position:absolute;left:1894.91px;top:903.55px;font-size:29px;font-weight:400;line-height:35px;color:#0a0f14;white-space:pre;transform:scaleX(1.0435);transform-origin:0 0;'>No Recommendation</div>
<div style='position:absolute;left:2262.6px;top:898.3999999999999px;width:106.0px;height:43.0px;background:#eceff3;border-radius:8px'></div>
<div style='position:absolute;left:2274.63px;top:903.24px;font-size:27px;font-weight:400;line-height:32px;color:#3b4450;white-space:pre;transform:scaleX(0.9730);transform-origin:0 0;'>0%</div>
<div style='position:absolute;left:2325.6px;top:917.9999999999999px;width:26.0px;height:2.800000000000068px;background:#3b4450;border-radius:1px'></div>
<div style='position:absolute;left:2627px;top:898.3999999999999px;width:106px;height:43.0px;background:#eceff3;border-radius:8px'></div>
<div style='position:absolute;left:2639.03px;top:903.24px;font-size:27px;font-weight:400;line-height:32px;color:#3b4450;white-space:pre;transform:scaleX(0.9730);transform-origin:0 0;'>0%</div>
<div style='position:absolute;left:2690px;top:917.9999999999999px;width:26px;height:2.800000000000068px;background:#3b4450;border-radius:1px'></div>
<div style='position:absolute;left:137px;top:1066.1px;width:2851px;height:2.0px;background:#eceef1'></div>
<div style='position:absolute;left:186.5px;top:1001.95px;width:33.0px;height:33.0px;box-sizing:border-box;border-radius:6px;background:#f7f9fb;border:3px solid #9aa0a7'></div>
<div style='position:absolute;left:258.74px;top:1002.40px;font-size:29px;font-weight:400;line-height:35px;color:#0b62c0;white-space:pre;transform:scaleX(1.0312);transform-origin:0 0;'>metrics-server-v1.33.0</div>
<div style='position:absolute;left:1165.20px;top:1002.40px;font-size:29px;font-weight:400;line-height:35px;color:#0a0f14;white-space:pre;transform:scaleX(1.0525);transform-origin:0 0;'>metrics-server</div>
<div style='position:absolute;left:1532.6px;top:997.25px;width:106.0px;height:43.0px;background:#eceff3;border-radius:8px'></div>
<div style='position:absolute;left:1544.63px;top:1002.09px;font-size:27px;font-weight:400;line-height:32px;color:#3b4450;white-space:pre;transform:scaleX(0.9730);transform-origin:0 0;'>0%</div>
<div style='position:absolute;left:1595.6px;top:1016.85px;width:26.0px;height:2.800000000000068px;background:#3b4450;border-radius:1px'></div>
<div style='position:absolute;left:1897px;top:997.25px;width:106px;height:43.0px;background:#eceff3;border-radius:8px'></div>
<div style='position:absolute;left:1909.03px;top:1002.09px;font-size:27px;font-weight:400;line-height:32px;color:#3b4450;white-space:pre;transform:scaleX(0.9730);transform-origin:0 0;'>0%</div>
<div style='position:absolute;left:1960px;top:1016.85px;width:26px;height:2.800000000000068px;background:#3b4450;border-radius:1px'></div>
<div style='position:absolute;left:2262.6px;top:997.25px;width:172.3499999999999px;height:43.0px;background:#e5f8ef;border-radius:8px'></div>
<div style='position:absolute;left:2275.13px;top:1002.69px;font-size:27px;font-weight:400;line-height:32px;color:#0f6a3d;white-space:pre;transform:scaleX(0.9700);transform-origin:0 0;'>38.095%</div>
<svg style='position:absolute;left:2393.95px;top:1004.75px;' width='24.0' height='28.0' viewBox='0 0 24.0 28.0' fill='none'><g stroke='#0f6a3d' stroke-width='2.8' fill='none' stroke-linecap='round' stroke-linejoin='round'><path d='M12 1 V24 M3 15 L12 24 L21 15'/></g></svg>
<div style='position:absolute;left:2627px;top:997.25px;width:172.3499999999999px;height:43.0px;background:#fde6e7;border-radius:8px'></div>
<div style='position:absolute;left:2639.53px;top:1002.69px;font-size:27px;font-weight:400;line-height:32px;color:#a8121b;white-space:pre;transform:scaleX(0.9700);transform-origin:0 0;'>22.222%</div>
<svg style='position:absolute;left:2758.35px;top:1004.75px;' width='24.0' height='28.0' viewBox='0 0 24.0 28.0' fill='none'><g stroke='#a8121b' stroke-width='2.8' fill='none' stroke-linecap='round' stroke-linejoin='round'><path d='M12 26 V3 M3 12 L12 3 L21 12'/></g></svg>
<div style='position:absolute;left:137px;top:1164.9499999999998px;width:2851px;height:2.0px;background:#eceef1'></div>
<div style='position:absolute;left:186.5px;top:1100.8px;width:33.0px;height:33.0px;box-sizing:border-box;border-radius:6px;background:#f7f9fb;border:3px solid #9aa0a7'></div>
<div style='position:absolute;left:258.69px;top:1101.25px;font-size:29px;font-weight:400;line-height:35px;color:#0b62c0;white-space:pre;transform:scaleX(1.0534);transform-origin:0 0;'>kube-dns</div>
<div style='position:absolute;left:1165.19px;top:1101.25px;font-size:29px;font-weight:400;line-height:35px;color:#0a0f14;white-space:pre;transform:scaleX(1.0551);transform-origin:0 0;'>kubedns</div>
<div style='position:absolute;left:1532.6px;top:1096.1px;width:106.0px;height:43.0px;background:#eceff3;border-radius:8px'></div>
<div style='position:absolute;left:1544.63px;top:1100.94px;font-size:27px;font-weight:400;line-height:32px;color:#3b4450;white-space:pre;transform:scaleX(0.9730);transform-origin:0 0;'>0%</div>
<div style='position:absolute;left:1595.6px;top:1115.7px;width:26.0px;height:2.7999999999999545px;background:#3b4450;border-radius:1px'></div>
<div style='position:absolute;left:1897px;top:1096.1px;width:62px;height:43.0px;background:#fde6e7;border-radius:8px'></div>
<svg style='position:absolute;left:1916px;top:1103.6px;' width='24' height='28.0' viewBox='0 0 24 28.0' fill='none'><g stroke='#a8121b' stroke-width='2.8' fill='none' stroke-linecap='round' stroke-linejoin='round'><path d='M12 26 V3 M3 12 L12 3 L21 12'/></g></svg>
<div style='position:absolute;left:2262.6px;top:1096.1px;width:120.94000000000005px;height:43.0px;background:#e5f8ef;border-radius:8px'></div>
<div style='position:absolute;left:2275.13px;top:1101.54px;font-size:27px;font-weight:400;line-height:32px;color:#0f6a3d;white-space:pre;transform:scaleX(0.9700);transform-origin:0 0;'>60%</div>
<svg style='position:absolute;left:2342.54px;top:1103.6px;' width='24.0' height='28.0' viewBox='0 0 24.0 28.0' fill='none'><g stroke='#0f6a3d' stroke-width='2.8' fill='none' stroke-linecap='round' stroke-linejoin='round'><path d='M12 1 V24 M3 15 L12 24 L21 15'/></g></svg>
<div style='position:absolute;left:2627px;top:1096.1px;width:157.80000000000018px;height:43.0px;background:#e5f8ef;border-radius:8px'></div>
<div style='position:absolute;left:2639.53px;top:1101.54px;font-size:27px;font-weight:400;line-height:32px;color:#0f6a3d;white-space:pre;transform:scaleX(0.9700);transform-origin:0 0;'>73.81%</div>
<svg style='position:absolute;left:2743.8px;top:1103.6px;' width='24.0' height='28.0' viewBox='0 0 24.0 28.0' fill='none'><g stroke='#0f6a3d' stroke-width='2.8' fill='none' stroke-linecap='round' stroke-linejoin='round'><path d='M12 1 V24 M3 15 L12 24 L21 15'/></g></svg>
<div style='position:absolute;left:137px;top:1263.7999999999997px;width:2851px;height:2.0px;background:#eceef1'></div>
<div style='position:absolute;left:186.5px;top:1199.6499999999999px;width:33.0px;height:33.0px;box-sizing:border-box;border-radius:6px;background:#f7f9fb;border:3px solid #9aa0a7'></div>
<div style='position:absolute;left:258.69px;top:1200.10px;font-size:29px;font-weight:400;line-height:35px;color:#0b62c0;white-space:pre;transform:scaleX(1.0534);transform-origin:0 0;'>kube-dns</div>
<div style='position:absolute;left:1165.22px;top:1200.10px;font-size:29px;font-weight:400;line-height:35px;color:#0a0f14;white-space:pre;transform:scaleX(1.0386);transform-origin:0 0;'>kubedns-metrics-collec...</div>
<div style='position:absolute;left:1532.6px;top:1194.9499999999998px;width:106.0px;height:43.0px;background:#eceff3;border-radius:8px'></div>
<div style='position:absolute;left:1544.63px;top:1199.79px;font-size:27px;font-weight:400;line-height:32px;color:#3b4450;white-space:pre;transform:scaleX(0.9730);transform-origin:0 0;'>0%</div>
<div style='position:absolute;left:1595.6px;top:1214.55px;width:26.0px;height:2.7999999999999545px;background:#3b4450;border-radius:1px'></div>
<div style='position:absolute;left:1897px;top:1194.9499999999998px;width:106px;height:43.0px;background:#eceff3;border-radius:8px'></div>
<div style='position:absolute;left:1909.03px;top:1199.79px;font-size:27px;font-weight:400;line-height:32px;color:#3b4450;white-space:pre;transform:scaleX(0.9730);transform-origin:0 0;'>0%</div>
<div style='position:absolute;left:1960px;top:1214.55px;width:26px;height:2.7999999999999545px;background:#3b4450;border-radius:1px'></div>
<div style='position:absolute;left:2262.6px;top:1194.9499999999998px;width:172.3499999999999px;height:43.0px;background:#e5f8ef;border-radius:8px'></div>
<div style='position:absolute;left:2275.13px;top:1200.39px;font-size:27px;font-weight:400;line-height:32px;color:#0f6a3d;white-space:pre;transform:scaleX(0.9700);transform-origin:0 0;'>66.667%</div>
<svg style='position:absolute;left:2393.95px;top:1202.4499999999998px;' width='24.0' height='28.0' viewBox='0 0 24.0 28.0' fill='none'><g stroke='#0f6a3d' stroke-width='2.8' fill='none' stroke-linecap='round' stroke-linejoin='round'><path d='M12 1 V24 M3 15 L12 24 L21 15'/></g></svg>
<div style='position:absolute;left:2627px;top:1194.9499999999998px;width:168.4699999999998px;height:43.0px;background:#e5f8ef;border-radius:8px'></div>
<div style='position:absolute;left:2639.53px;top:1200.39px;font-size:27px;font-weight:400;line-height:32px;color:#0f6a3d;white-space:pre;transform:scaleX(0.9700);transform-origin:0 0;'>31.111%</div>
<svg style='position:absolute;left:2754.47px;top:1202.4499999999998px;' width='24.0' height='28.0' viewBox='0 0 24.0 28.0' fill='none'><g stroke='#0f6a3d' stroke-width='2.8' fill='none' stroke-linecap='round' stroke-linejoin='round'><path d='M12 1 V24 M3 15 L12 24 L21 15'/></g></svg>
<div style='position:absolute;left:137px;top:1362.6499999999999px;width:2851px;height:2.0px;background:#eceef1'></div>
<div style='position:absolute;left:186.5px;top:1298.5px;width:33.0px;height:33.0px;box-sizing:border-box;border-radius:6px;background:#f7f9fb;border:3px solid #9aa0a7'></div>
<div style='position:absolute;left:259.75px;top:1298.95px;font-size:29px;font-weight:400;line-height:35px;color:#0b62c0;white-space:pre;transform:scaleX(1.0457);transform-origin:0 0;'>devtron-monitoring-stage-mon-k8s-event-logger</div>
<div style='position:absolute;left:1165.25px;top:1298.95px;font-size:29px;font-weight:400;line-height:35px;color:#0a0f14;white-space:pre;transform:scaleX(1.0234);transform-origin:0 0;'>k8s-event-logger</div>
<div style='position:absolute;left:1532.6px;top:1293.8px;width:106.0px;height:43.0px;background:#eceff3;border-radius:8px'></div>
<div style='position:absolute;left:1544.63px;top:1298.64px;font-size:27px;font-weight:400;line-height:32px;color:#3b4450;white-space:pre;transform:scaleX(0.9730);transform-origin:0 0;'>0%</div>
<div style='position:absolute;left:1595.6px;top:1313.4px;width:26.0px;height:2.7999999999999545px;background:#3b4450;border-radius:1px'></div>
<div style='position:absolute;left:1897px;top:1293.8px;width:106px;height:43.0px;background:#eceff3;border-radius:8px'></div>
<div style='position:absolute;left:1909.03px;top:1298.64px;font-size:27px;font-weight:400;line-height:32px;color:#3b4450;white-space:pre;transform:scaleX(0.9730);transform-origin:0 0;'>0%</div>
<div style='position:absolute;left:1960px;top:1313.4px;width:26px;height:2.7999999999999545px;background:#3b4450;border-radius:1px'></div>
<div style='position:absolute;left:2262.6px;top:1293.8px;width:172.3499999999999px;height:43.0px;background:#e5f8ef;border-radius:8px'></div>
<div style='position:absolute;left:2275.13px;top:1299.24px;font-size:27px;font-weight:400;line-height:32px;color:#0f6a3d;white-space:pre;transform:scaleX(0.9700);transform-origin:0 0;'>92.188%</div>
<svg style='position:absolute;left:2393.95px;top:1301.3px;' width='24.0' height='28.0' viewBox='0 0 24.0 28.0' fill='none'><g stroke='#0f6a3d' stroke-width='2.8' fill='none' stroke-linecap='round' stroke-linejoin='round'><path d='M12 1 V24 M3 15 L12 24 L21 15'/></g></svg>
<div style='position:absolute;left:2627px;top:1293.8px;width:172.3499999999999px;height:43.0px;background:#e5f8ef;border-radius:8px'></div>
<div style='position:absolute;left:2639.53px;top:1299.24px;font-size:27px;font-weight:400;line-height:32px;color:#0f6a3d;white-space:pre;transform:scaleX(0.9700);transform-origin:0 0;'>84.375%</div>
<svg style='position:absolute;left:2758.35px;top:1301.3px;' width='24.0' height='28.0' viewBox='0 0 24.0 28.0' fill='none'><g stroke='#0f6a3d' stroke-width='2.8' fill='none' stroke-linecap='round' stroke-linejoin='round'><path d='M12 1 V24 M3 15 L12 24 L21 15'/></g></svg>
<div style='position:absolute;left:137px;top:1461.4999999999998px;width:2851px;height:2.0px;background:#eceef1'></div>
<div style='position:absolute;left:186.5px;top:1397.35px;width:33.0px;height:33.0px;box-sizing:border-box;border-radius:6px;background:#f7f9fb;border:3px solid #9aa0a7'></div>
<div style='position:absolute;left:258.76px;top:1397.80px;font-size:29px;font-weight:400;line-height:35px;color:#0b62c0;white-space:pre;transform:scaleX(1.0176);transform-origin:0 0;'>license-manager-stage-license</div>
<div style='position:absolute;left:1165.24px;top:1397.80px;font-size:29px;font-weight:400;line-height:35px;color:#0a0f14;white-space:pre;transform:scaleX(1.0297);transform-origin:0 0;'>license-manager</div>
<div style='position:absolute;left:1530.51px;top:1397.80px;font-size:29px;font-weight:400;line-height:35px;color:#0a0f14;white-space:pre;transform:scaleX(1.0435);transform-origin:0 0;'>No Recommendation</div>
<div style='position:absolute;left:1894.91px;top:1397.80px;font-size:29px;font-weight:400;line-height:35px;color:#0a0f14;white-space:pre;transform:scaleX(1.0435);transform-origin:0 0;'>No Recommendation</div>
<div style='position:absolute;left:2260.51px;top:1397.80px;font-size:29px;font-weight:400;line-height:35px;color:#0a0f14;white-space:pre;transform:scaleX(1.0435);transform-origin:0 0;'>No Recommendation</div>
<div style='position:absolute;left:2624.91px;top:1397.80px;font-size:29px;font-weight:400;line-height:35px;color:#0a0f14;white-space:pre;transform:scaleX(1.0435);transform-origin:0 0;'>No Recommendation</div>
<div style='position:absolute;left:137px;top:1560.35px;width:2851px;height:2.0px;background:#eceef1'></div>
<div style='position:absolute;left:186.5px;top:1496.2px;width:33.0px;height:33.0px;box-sizing:border-box;border-radius:6px;background:#f7f9fb;border:3px solid #9aa0a7'></div>
<div style='position:absolute;left:259.77px;top:1496.65px;font-size:29px;font-weight:400;line-height:35px;color:#0b62c0;white-space:pre;transform:scaleX(1.0303);transform-origin:0 0;'>scoop-stage-mon</div>
<div style='position:absolute;left:1166.27px;top:1496.65px;font-size:29px;font-weight:400;line-height:35px;color:#0a0f14;white-space:pre;transform:scaleX(1.0333);transform-origin:0 0;'>scoop</div>
<div style='position:absolute;left:1532.6px;top:1491.5px;width:106.0px;height:43.0px;background:#eceff3;border-radius:8px'></div>
<div style='position:absolute;left:1544.63px;top:1496.34px;font-size:27px;font-weight:400;line-height:32px;color:#3b4450;white-space:pre;transform:scaleX(0.9730);transform-origin:0 0;'>0%</div>
<div style='position:absolute;left:1595.6px;top:1511.1000000000001px;width:26.0px;height:2.7999999999999545px;background:#3b4450;border-radius:1px'></div>
<div style='position:absolute;left:1897px;top:1491.5px;width:106px;height:43.0px;background:#eceff3;border-radius:8px'></div>
<div style='position:absolute;left:1909.03px;top:1496.34px;font-size:27px;font-weight:400;line-height:32px;color:#3b4450;white-space:pre;transform:scaleX(0.9730);transform-origin:0 0;'>0%</div>
<div style='position:absolute;left:1960px;top:1511.1000000000001px;width:26px;height:2.7999999999999545px;background:#3b4450;border-radius:1px'></div>
<div style='position:absolute;left:2262.6px;top:1491.5px;width:157.80000000000018px;height:43.0px;background:#e5f8ef;border-radius:8px'></div>
<div style='position:absolute;left:2275.13px;top:1496.94px;font-size:27px;font-weight:400;line-height:32px;color:#0f6a3d;white-space:pre;transform:scaleX(0.9700);transform-origin:0 0;'>8.626%</div>
<svg style='position:absolute;left:2379.4px;top:1499.0px;' width='24.0' height='28.0' viewBox='0 0 24.0 28.0' fill='none'><g stroke='#0f6a3d' stroke-width='2.8' fill='none' stroke-linecap='round' stroke-linejoin='round'><path d='M12 1 V24 M3 15 L12 24 L21 15'/></g></svg>
<div style='position:absolute;left:2627px;top:1491.5px;width:157.80000000000018px;height:43.0px;background:#e5f8ef;border-radius:8px'></div>
<div style='position:absolute;left:2639.53px;top:1496.94px;font-size:27px;font-weight:400;line-height:32px;color:#0f6a3d;white-space:pre;transform:scaleX(0.9700);transform-origin:0 0;'>8.623%</div>
<svg style='position:absolute;left:2743.8px;top:1499.0px;' width='24.0' height='28.0' viewBox='0 0 24.0 28.0' fill='none'><g stroke='#0f6a3d' stroke-width='2.8' fill='none' stroke-linecap='round' stroke-linejoin='round'><path d='M12 1 V24 M3 15 L12 24 L21 15'/></g></svg>
</div>
<div style='position:absolute;left:951px;top:393px;width:2px;height:1148px;background:#d5d9de'></div>
<div style='position:absolute;left:137px;top:1540px;width:2851px;height:2px;background:#e8ebef'></div>
<div style='position:absolute;left:180.67px;top:1595.04px;font-size:27px;font-weight:400;line-height:32px;color:#2e3640;white-space:pre;transform:scaleX(1.0130);transform-origin:0 0;'>1 - 100 of 112</div>
<svg style='position:absolute;left:1358px;top:1600px;' width='18' height='23' viewBox='0 0 18 23' fill='none'><path d='M13 3 L5 11.5 L13 20' stroke='#8ea5c8' stroke-width='3' fill='none' stroke-linecap='round' stroke-linejoin='round'/></svg>
<div style='position:absolute;left:1412px;top:1586px;width:53px;height:52px;background:#0b66d0;border-radius:15px'></div>
<div style='position:absolute;left:1428.50px;top:1595.64px;font-size:27px;font-weight:400;line-height:32px;color:#ffffff;white-space:pre;transform:scaleX(1.2500);transform-origin:0 0;'>1</div>
<div style='position:absolute;left:1519.00px;top:1595.64px;font-size:27px;font-weight:400;line-height:32px;color:#1a5fb4;white-space:pre;'>2</div>
<svg style='position:absolute;left:1588px;top:1600px;' width='18' height='23' viewBox='0 0 18 23' fill='none'><path d='M5 3 L13 11.5 L5 20' stroke='#0b5cb8' stroke-width='3' fill='none' stroke-linecap='round' stroke-linejoin='round'/></svg>
<div style='position:absolute;left:2616.81px;top:1595.64px;font-size:27px;font-weight:400;line-height:32px;color:#2e3640;white-space:pre;transform:scaleX(0.9955);transform-origin:0 0;'>Rows per page</div>
<div style='position:absolute;left:2816.5px;top:1577.5px;width:138.5px;height:69.0px;box-sizing:border-box;background:#fff;border:2px solid #cdd1d6;border-radius:10px'></div>
<div style='position:absolute;left:2838.95px;top:1595.64px;font-size:27px;font-weight:400;line-height:32px;color:#0a0f14;white-space:pre;transform:scaleX(1.0238);transform-origin:0 0;'>100</div>
<svg style='position:absolute;left:2923px;top:1607px;' width='18' height='11' viewBox='0 0 18 11' fill='none'><path d='M1.5 1.5 H16.5 L9 10 Z' fill='#6b737c'/></svg>
<div style='position:absolute;left:2259.3px;top:430.8px;width:336.6999999999998px;height:247.7px;background:#050b14;border-radius:10px'></div>
<div style='position:absolute;left:2259.3px;top:504.5px;width:336.6999999999998px;height:2.0px;background:#1f2933'></div>
<div style='position:absolute;left:2293.39px;top:450.30px;font-size:28px;font-weight:400;line-height:34px;color:#ffffff;white-space:pre;transform:scaleX(1.0032);transform-origin:0 0;-webkit-text-stroke:1.00px #ffffff;'>Mem Requests</div>
<div style='position:absolute;left:2294.36px;top:528.64px;font-size:27px;font-weight:400;line-height:32px;color:#ffffff;white-space:pre;transform:scaleX(1.0404);transform-origin:0 0;'>Current</div>
<div style='position:absolute;left:2496.91px;top:528.64px;font-size:27px;font-weight:400;line-height:32px;color:#ffffff;white-space:pre;transform:scaleX(1.0893);transform-origin:0 0;-webkit-text-stroke:0.96px #ffffff;'>30Mi</div>
<div style='position:absolute;left:2293.35px;top:576.24px;font-size:27px;font-weight:400;line-height:32px;color:#ffffff;white-space:pre;transform:scaleX(1.0257);transform-origin:0 0;'>Recommended</div>
<div style='position:absolute;left:2495.78px;top:576.24px;font-size:27px;font-weight:400;line-height:32px;color:#ffffff;white-space:pre;transform:scaleX(1.1091);transform-origin:0 0;-webkit-text-stroke:0.96px #ffffff;'>14Mi</div>
<div style='position:absolute;left:2294.43px;top:625.64px;font-size:27px;font-weight:400;line-height:32px;color:#ffffff;white-space:pre;transform:scaleX(0.9742);transform-origin:0 0;'>Change</div>
<svg style='position:absolute;left:2426px;top:626px;' width='22' height='29' viewBox='0 0 22 29' fill='none'><g stroke='#3fb57c' stroke-width='2.6' fill='none' stroke-linecap='round' stroke-linejoin='round'><path d='M11 3 V25 M3 17 L11 25 L19 17'/></g></svg>
<div style='position:absolute;left:2454.01px;top:625.64px;font-size:27px;font-weight:400;line-height:32px;color:#3fb57c;white-space:pre;transform:scaleX(0.9905);transform-origin:0 0;-webkit-text-stroke:0.96px #3fb57c;'>53.333%</div>
<div style='position:absolute;left:2236.4px;top:401.9px;width:381.1999999999998px;height:353.80000000000007px;box-sizing:border-box;border:5px solid #e3131b'></div>
</div>
</body></html>
